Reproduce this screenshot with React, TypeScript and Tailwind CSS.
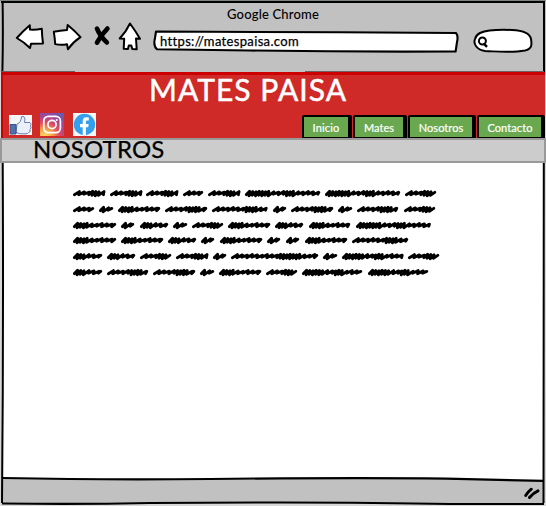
import React from "react";

type Word = [number, number, ("l" | "d")?];

const LINES: Word[][] = [
  [[73, 105], [110, 142], [146, 178], [183, 203], [208, 240], [245, 320, "d"], [325, 400, "d"], [405, 436]],
  [[73, 94], [99, 113, "d"], [118, 160, "d"], [165, 207], [212, 267], [273, 286, "d"], [291, 333], [338, 352, "d"], [357, 398], [404, 435]],
  [[73, 116, "d"], [121, 134, "d"], [140, 168, "d"], [173, 187, "d"], [192, 223], [228, 270, "d"], [275, 303, "d"], [309, 350, "d"], [356, 430, "d"]],
  [[73, 116, "d"], [121, 163, "d"], [168, 196, "d"], [201, 214, "d"], [220, 262, "d"], [267, 280, "d"], [286, 299, "d"], [305, 347, "d"], [352, 408]],
  [[73, 102, "d"], [107, 135, "d"], [140, 171], [176, 208], [213, 226, "d"], [231, 318], [323, 337, "d"], [342, 403, "d"], [408, 439]],
  [[73, 102, "d"], [107, 148], [153, 195], [200, 214, "d"], [219, 261, "d"], [266, 297], [302, 362, "d"], [368, 428, "d"]],
];

// One scribbled word: slanted strokes, packed tighter in its dense part.
function scribble([start, end, kind = "l"]: Word) {
  const x0 = start - 72;
  const x1 = end - 73.2;
  let x = x0 + 1.4;
  let d = `M${x} ${kind === "d" ? 7.6 : 7.8}`;
  let i = 0;
  while (x < x1 - 4) {
    const t = (x - x0) / (x1 - x0);
    const dense = kind === "d" ? t < 0.3 || (x1 - x0 > 50 && t > 0.5 && t < 0.65) : x1 - x0 > 24 && t > 0.5 && t < 0.78;
    const top = (dense ? 4.3 : 4.6) + (i % 3) * 0.3;
    const bottom = (dense ? 8.2 : 7.2) + ((i + 1) % 2) * 0.5;
    const reach = dense ? 3.2 : 5;
    d += ` L${(x + reach).toFixed(1)} ${top.toFixed(1)} L${(x + reach - 0.6).toFixed(1)} ${bottom.toFixed(1)}`;
    x += dense ? 3.2 : 5;
    i++;
  }
  return d + ` L${x1.toFixed(1)} 5.4`;
}

function ToolbarIcons() {
  return (
    <svg className="h-[32px] w-[130px] shrink-0" viewBox="14 20 130 32" fill="#fff" stroke="#000" strokeWidth="2" strokeLinejoin="round" strokeLinecap="round">
      <path d="M16.8 38 Q23 31 29.8 25.2 L30 29.6 Q36 30 41.8 28.8 Q42 36 43 43.5 L31 43.8 L30 48 Q24 42 16.8 38Z" />
      <path d="M53.8 31.7 Q60 30.5 67 30 L67.7 25 Q75 31 80.5 37.2 Q73 42 68 49.3 L67 44.2 Q61 45.5 55.2 44.1 Q54.8 38 53.8 31.7Z" />
      <g strokeWidth="4.7" fill="none">
        <path d="M97 28.6 Q100 36 106.8 42.4" />
        <path d="M107.4 28.6 Q101 35 97 42.6" />
      </g>
      <path d="M130 23.5 Q135.5 31 140 38.8 L136 38.5 L136.7 49.3 L132.3 49 L131.3 45.5 L128.8 45.5 L128 49 L123.7 48.8 L124.2 38.7 L119.7 38.5 Q126 32 130 23.5Z" />
    </svg>
  );
}

function Toolbar() {
  return (
    <header className="h-[72px] bg-[#c1c1c1] px-[13px] pt-[6px]">
      <div className="h-[14px] text-center text-[13px] leading-[16px] font-medium tracking-[0.18px]">Google Chrome</div>
      <div className="flex pl-px">
        <ToolbarIcons />
        <div className="mt-[9px] ml-[9px] grid h-[24px] w-[307px] shrink-0">
          <svg className="col-start-1 row-start-1 h-[24px] w-[307px]" viewBox="153 29 307 24" fill="#fff" stroke="#000" strokeWidth="2.1" strokeLinejoin="round">
            <path d="M156 31.5 Q250 31.5 340 32.3 L456 33 Q458.5 36 457 42 L455.6 51.5 Q350 52 250 50.5 L157 49.3 Q153 46 155 38Z" />
          </svg>
          <span className="col-start-1 row-start-1 pl-[7px] text-[13px] leading-[24px] tracking-[0.34px] [-webkit-text-stroke:0.25px_black]">https://matespaisa.com</span>
        </div>
        <svg className="mt-[7px] ml-[12px] h-[28px] w-[62px] shrink-0" viewBox="472 27 62 28" fill="#fff" stroke="#000" strokeWidth="2">
          <path d="M480 33 C488 29.5 502 29.6 512 30 C524 30.6 530 33 531 39 C532 45 532 49 525 50.5 C511 53 498 51.5 485 51 C477 50 473 44 475 39 C476 35 478 34 480 33Z" />
          <circle cx="482.4" cy="41" r="3.5" />
          <path d="M483.5 43.4 L487 46.8" strokeWidth="2.5" />
        </svg>
      </div>
    </header>
  );
}

function SocialIcons() {
  return (
    <div className="flex h-[24px] items-end">
      <svg className="mb-px h-[20px] w-[23px]" viewBox="0 0 23 20">
        <rect width="23" height="20" fill="#f4f5f7" />
        <path d="M8 9 Q12 8 12.5 1.7 Q15 0 16 4 L15.5 7.5 H21 Q23 9 21.5 11 Q23 13 21 14.5 Q22 17 19.5 17.5 Q19 19 16 18.8 H11 L7 17.5Z" fill="#eaf0fb" stroke="#6c7fae" strokeWidth="1" />
        <path d="M1 9.5 H7 V19 H1Z" fill="#5470aa" stroke="#34528f" />
      </svg>
      <svg className="ml-[8px] h-[23px] w-[24px]" viewBox="0 0 24 23">
        <defs>
          <radialGradient id="ig" cx="0.2" cy="1" r="1.15">
            <stop offset="0" stopColor="#ffdc63" />
            <stop offset="0.28" stopColor="#f5a04b" />
            <stop offset="0.52" stopColor="#df4b62" />
            <stop offset="0.75" stopColor="#a64498" />
            <stop offset="1" stopColor="#655bb1" />
          </radialGradient>
        </defs>
        <rect width="24" height="23" fill="url(#ig)" />
        <g fill="none" stroke="#fff" strokeWidth="1.7">
          <rect x="3.8" y="3.4" width="16.6" height="16.2" rx="4.5" />
          <circle cx="12" cy="11.5" r="4.1" />
        </g>
        <circle cx="16.7" cy="7" r="1.1" fill="#fff" />
      </svg>
      <svg className="ml-[9px] h-[23px] w-[23px]" viewBox="0 0 23 23">
        <rect width="23" height="23" fill="#f6f6f6" />
        <circle cx="11.5" cy="11.5" r="10.7" fill="#349fed" />
        <path d="M9.7 22 V14.3 H7 V11 H9.7 V8.5 Q9.8 4.2 13.2 4.3 L15.8 4.5 V7.4 H14.2 Q12.9 7.4 12.9 8.7 V11 H15.7 L15.2 14.3 H12.9 V22Z" fill="#fff" />
      </svg>
    </div>
  );
}

function Tab({ label, className }: { label: string; className: string }) {
  return (
    <a className={`flex h-[23px] items-center justify-center rounded-t-[2px] border-2 border-r-4 border-b border-black bg-[#6aa84f] pt-[3px] text-[11px] whitespace-nowrap text-white [-webkit-text-stroke:0.2px_white] ${className}`}>
      {label}
    </a>
  );
}

function SiteHeader() {
  return (
    <section className="mx-[1px] flex h-[66px] flex-col justify-between border-t-[3px] border-l-[2px] border-[#cc0000] bg-[#cf2a27]">
      <h1 className="h-[30px] pl-[146px] text-[30px] leading-[28px] whitespace-nowrap text-white [-webkit-text-stroke:0.5px_white]">
        <span className="inline-block tracking-[1.05px]">MATES PAISA</span>
      </h1>
      <div className="flex items-end justify-between pl-[6px]">
        <div className="mb-[2px]">
          <SocialIcons />
        </div>
        <nav className="flex gap-px">
          <Tab label="Inicio" className="w-[50px] tracking-[0.15px]" />
          <Tab label="Mates" className="w-[54px] tracking-[0.05px]" />
          <Tab label="Nosotros" className="w-[68px] tracking-[0.05px]" />
          <Tab label="Contacto" className="w-[68px] tracking-[0.1px]" />
        </nav>
      </div>
    </section>
  );
}

export default function App() {
  return (
    <main className="relative flex h-[506px] w-[546px] flex-col overflow-hidden bg-[#d8d8d8] font-['Lato','Open_Sans',sans-serif] text-black">
      <Toolbar />
      <SiteHeader />
      <div className="relative z-10 h-[25px] border-2 border-[#999] bg-[#ccc] pl-[31px]">
        <h2 className="text-[24px] leading-[17px] tracking-[0.15px] [-webkit-text-stroke:0.25px_black]">NOSOTROS</h2>
      </div>
      <article className="mx-[3px] h-[316px] bg-white pt-[24px] pl-[69px]">
        {LINES.map((line, i) => (
          <svg key={i} className="mb-[3.8px] block h-[12px] w-[370px]" viewBox="0 0 370 12" fill="none" stroke="#000" strokeWidth="2.9" strokeLinecap="round" strokeLinejoin="round">
            {line.map((word, j) => (
              <path key={j} d={scribble(word)} />
            ))}
          </svg>
        ))}
      </article>
      <footer className="mx-[3px] flex h-[24px] items-center justify-end bg-[#c1c1c1] pt-[5px] pr-[3px]">
        <svg className="h-[13px] w-[16px]" viewBox="0 0 16 13" fill="none" stroke="#000" strokeWidth="2.9" strokeLinecap="round">
          <path d="M1.7 8.5 Q4 4.8 7.3 2.2 M5.5 10.5 Q9 6 14 3.8" />
        </svg>
      </footer>
      <svg className="pointer-events-none absolute inset-0 h-[506px] w-[546px]" viewBox="0 0 546 506" fill="none" stroke="#000">
        <path d="M0 .5 H546" stroke="#7d837d" />
        <path d="M1 2 H545" strokeWidth="2" />
        <path d="M2.6 2 Q3.2 35 2.4 72 M2.7 162 Q3.6 330 2 503" strokeWidth="2" />
        <path d="M544 2 V72 M543.8 162 Q543 340 543.5 503" strokeWidth="2" />
        <path d="M2 71.5 H75 M305 71.5 H544" stroke="#696060" />
        <path d="M3 478 Q100 480 210 479 Q350 477.5 446 478.6 L544 481" strokeWidth="2.1" />
        <path d="M2 503.5 Q80 504.5 150 503 Q340 501.5 450 504 H544" strokeWidth="2.1" />
      </svg>
    </main>
  );
}
